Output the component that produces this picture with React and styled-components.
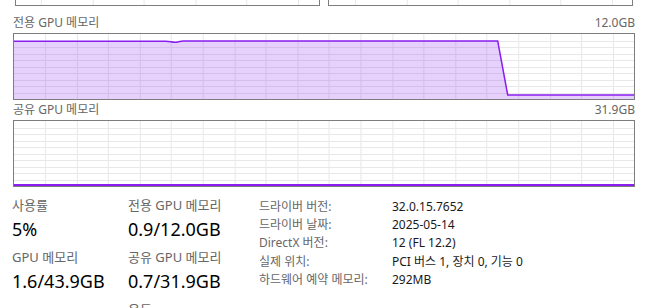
import React from "react";
import styled, { createGlobalStyle } from "styled-components";

const GlobalStyle = createGlobalStyle`
  html, body {
    margin: 0;
    padding: 0;
    background: #fff;
  }
  body {
    font-family: "Noto Sans", "Noto Sans CJK KR", sans-serif;
    color: #000;
  }
`;

const LINE = "#8a1ef0";
const FILL = "rgba(140, 40, 240, 0.22)";
const GRID = "#e8e8e8";

const Page = styled.div`
  width: 647px;
  height: 308px;
  overflow: hidden;
`;

const TopRow = styled.div`
  display: flex;
  gap: 8px;
  padding: 0 14px 0 15px;
`;

const StubChart = styled.div`
  flex: 1;
  height: 5px;
  border: 1px solid #7d7d7d;
  border-top: none;
`;

const ChartBlock = styled.div`
  padding: 0 12px 0 13px;
  margin-top: ${(p) => p.$top}px;
`;

const ChartHeader = styled.div`
  display: flex;
  justify-content: space-between;
  font-size: 12px;
  line-height: 16px;
  color: #666;
  margin-bottom: 2px;
`;

const Frame = styled.div`
  height: 65px;
  border: 1px solid #7d7d7d;
  display: flex;
`;

const Plot = styled.svg`
  display: block;
  width: 100%;
  height: 100%;
`;

const Stats = styled.div`
  display: flex;
  margin-top: 9px;
  padding-left: 12px;
`;

const StatGrid = styled.div`
  display: grid;
  grid-template-columns: 116px 131px;
  align-content: start;
`;

const Stat = styled.div`
  display: flex;
  flex-direction: column;
  margin-bottom: 7px;
`;

const StatLabel = styled.div`
  font-size: 13px;
  line-height: 19px;
  color: #666;
`;

const StatValue = styled.div`
  font-size: 18px;
  line-height: 26px;
  color: #000;
  margin-top: 1px;
  margin-bottom: -1px;
`;

const InfoTable = styled.div`
  display: grid;
  grid-template-columns: 133px auto;
  align-content: start;
  font-size: 12px;
  line-height: 18.2px;
  margin-top: 2px;
`;

const InfoKey = styled.div`
  color: #666;
`;

const InfoVal = styled.div`
  color: #1a1a1a;
`;

function StubGrid({ offset }) {
  const xs = [0, 1, 2, 3, 4, 5].map((k) => Math.round(offset + 51.5 * k) + 0.5);
  return (
    <Plot viewBox="0 0 304 5" preserveAspectRatio="none">
      {xs.map((x) => (
        <line key={x} x1={x} y1="0" x2={x} y2="5" stroke={GRID} strokeWidth="1" />
      ))}
    </Plot>
  );
}

function Grid() {
  const xs = Array.from({ length: 19 }, (_, k) => Math.round(31 + 31.6 * k) + 0.5);
  const ys = Array.from({ length: 9 }, (_, k) => Math.round(6.5 * (k + 1)) + 0.5);
  return (
    <g>
      {xs.map((x) => (
        <line key={"v" + x} x1={x} y1="0" x2={x} y2="65" stroke={GRID} strokeWidth="1" />
      ))}
      {ys.map((y) => (
        <line key={"h" + y} x1="0" y1={y} x2="621" y2={y} stroke={GRID} strokeWidth="1" />
      ))}
    </g>
  );
}

const dedicated =
  "M0 7.2 L152 7.2 C156 7.2 158 8.3 161 8.3 C164 8.3 166 7 170 7 L484.5 7 L494.5 61 L621 61";

function DedicatedChart() {
  return (
    <Plot viewBox="0 0 621 65" preserveAspectRatio="none">
      <Grid />
      <path d={dedicated + " L621 65 L0 65 Z"} fill={FILL} />
      <path d={dedicated} fill="none" stroke={LINE} strokeWidth="1.5" />
    </Plot>
  );
}

function SharedChart() {
  return (
    <Plot viewBox="0 0 621 65" preserveAspectRatio="none">
      <Grid />
      <line x1="0" y1="64" x2="621" y2="64" stroke={LINE} strokeWidth="2" />
    </Plot>
  );
}

const stats = [
  ["사용률", "5%"],
  ["전용 GPU 메모리", "0.9/12.0GB"],
  ["GPU 메모리", "1.6/43.9GB"],
  ["공유 GPU 메모리", "0.7/31.9GB"],
  [null, null],
  ["온도", ""],
];

const info = [
  ["드라이버 버전:", "32.0.15.7652"],
  ["드라이버 날짜:", "2025-05-14"],
  ["DirectX 버전:", "12 (FL 12.2)"],
  ["실제 위치:", "PCI 버스 1, 장치 0, 기능 0"],
  ["하드웨어 예약 메모리:", "292MB"],
];

export default function App() {
  return (
    <Page>
      <GlobalStyle />
      <TopRow>
        <StubChart>
          <StubGrid offset={25} />
        </StubChart>
        <StubChart>
          <StubGrid offset={26} />
        </StubChart>
      </TopRow>

      <ChartBlock $top={9}>
        <ChartHeader>
          <span>전용 GPU 메모리</span>
          <span>12.0GB</span>
        </ChartHeader>
        <Frame>
          <DedicatedChart />
        </Frame>
      </ChartBlock>

      <ChartBlock $top={2}>
        <ChartHeader>
          <span>공유 GPU 메모리</span>
          <span>31.9GB</span>
        </ChartHeader>
        <Frame>
          <SharedChart />
        </Frame>
      </ChartBlock>

      <Stats>
        <StatGrid>
          {stats.map(([label, value], i) =>
            label === null ? (
              <div key={i} />
            ) : (
              <Stat key={i}>
                <StatLabel>{label}</StatLabel>
                <StatValue>{value}</StatValue>
              </Stat>
            )
          )}
        </StatGrid>
        <InfoTable>
          {info.map(([k, v]) => (
            <React.Fragment key={k}>
              <InfoKey>{k}</InfoKey>
              <InfoVal>{v}</InfoVal>
            </React.Fragment>
          ))}
        </InfoTable>
      </Stats>
    </Page>
  );
}
